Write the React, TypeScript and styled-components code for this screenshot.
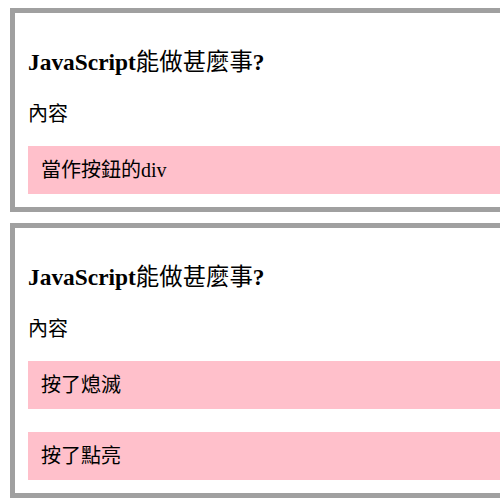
import React from "react";
import styled, { createGlobalStyle } from "styled-components";

const GlobalStyle = createGlobalStyle`
  html, body {
    margin: 0;
    padding: 0;
    overflow: hidden;
    background: #ffffff;
  }
  body {
    font-family: "Liberation Serif", "Noto Sans CJK TC", serif;
    font-size: 20px;
    color: #000000;
  }
`;

const Page = styled.div`
  display: flex;
  flex-direction: column;
  gap: 11px;
  width: 640px;
  padding: 8px 0 0 10px;
`;

const Card = styled.section`
  border: 5px solid #a0a0a0;
  padding: 0 13px 13px;
`;

const Heading = styled.h3`
  margin: 36px 0 24px;
  font-size: 23.4px;
  line-height: 27px;
  font-weight: bold;
`;

const Cjk = styled.span`
  font-weight: 400;
`;

const Text = styled.p`
  margin: 0 0 17px;
  font-size: 20px;
  line-height: 29px;
`;

const PinkButton = styled.div`
  height: 48px;
  line-height: 49px;
  padding: 0 13px;
  background: #ffc0cb;
  cursor: pointer;
  & + & {
    margin-top: 23px;
  }
`;

function Title() {
  return (
    <Heading>
      JavaScript<Cjk>能做甚麼事</Cjk>?
    </Heading>
  );
}

export default function App() {
  const [, setOn] = React.useState(true);
  return (
    <>
      <GlobalStyle />
      <Page>
        <Card>
          <Title />
          <Text>內容</Text>
          <PinkButton>當作按鈕的div</PinkButton>
        </Card>
        <Card>
          <Title />
          <Text>內容</Text>
          <PinkButton onClick={() => setOn(false)}>按了熄滅</PinkButton>
          <PinkButton onClick={() => setOn(true)}>按了點亮</PinkButton>
        </Card>
      </Page>
    </>
  );
}
